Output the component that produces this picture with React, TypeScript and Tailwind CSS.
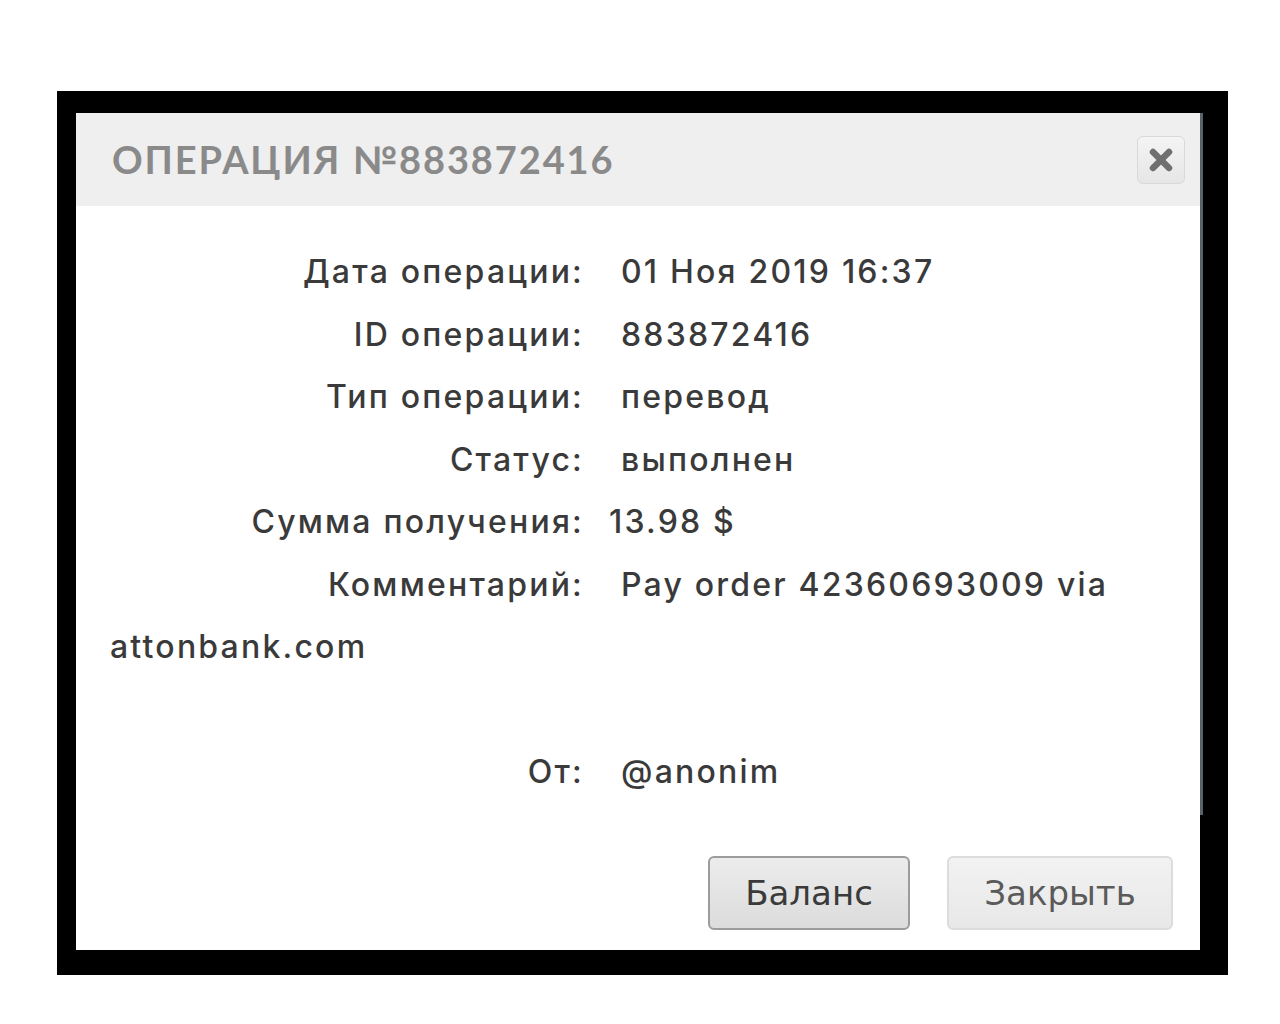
import React from "react";

const body = { fontFamily: "Inter, 'Noto Sans', sans-serif" } as React.CSSProperties;

function Row({ label, value, tight }: { label: string; value: React.ReactNode; tight?: boolean }) {
  return (
    <div className="h-[62.5px] leading-[62.5px] whitespace-nowrap">
      <span className="inline-block w-[499px] pr-[25px] text-right">{label}</span>
      <span className={tight ? "" : "pl-3"}>{value}</span>
    </div>
  );
}

export default function App() {
  return (
    <div className="min-h-screen bg-white pt-[91px] pl-[57px]">
      <div className="w-[1171px] h-[884px] bg-black pt-[22px] pl-[19px]">
        <div className="relative w-[1124px] h-[837px] bg-white flex flex-col">
          <div className="absolute right-[-3px] top-0 w-[3px] h-[702px] bg-[#56646a]" />
          <div className="h-[93px] bg-[#efefef] flex items-center justify-between pl-[36px] pr-[15px]">
            <div
              className="text-[38px] font-bold text-[#8a8a8a] tracking-[1.9px]"
              style={{ fontFamily: "Lato, 'DejaVu Sans', sans-serif" }}
            >
              ОПЕРАЦИЯ №883872416
            </div>
            <div className="w-[48px] h-[48px] rounded-[6px] border border-[#d9d9d9] bg-gradient-to-b from-[#f4f4f4] to-[#e6e6e6] flex items-center justify-center">
              <svg width="26" height="26" viewBox="0 0 26 26">
                <path d="M5 5 L21 21 M21 5 L5 21" stroke="#6f6f6f" strokeWidth="6.5" strokeLinecap="round" />
              </svg>
            </div>
          </div>
          <div className="pl-[34px] pt-[35px] text-[32px] font-medium tracking-[2.2px] text-[#3a3a3a]" style={body}>
            <Row label="Дата операции:" value="01 Ноя 2019 16:37" />
            <Row label="ID операции:" value="883872416" />
            <Row label="Тип операции:" value="перевод" />
            <Row label="Статус:" value="выполнен" />
            <Row label="Сумма получения:" value="13.98 $" tight />
            <Row label="Комментарий:" value="Pay order 42360693009 via" />
            <div className="h-[62.5px] leading-[62.5px]">attonbank.com</div>
            <div className="h-[62.5px]" />
            <Row label="От:" value="@anonim" />
          </div>
          <div
            className="mt-auto flex justify-end gap-[37px] pr-[27px] pb-[20px] text-[34px]"
            style={{ fontFamily: "'DejaVu Sans', sans-serif" }}
          >
            <button className="w-[202px] h-[74px] rounded-[6px] border-2 border-[#9c9c9c] bg-gradient-to-b from-[#ececec] to-[#dcdcdc] text-[#3a3a3a]">
              Баланс
            </button>
            <button className="w-[226px] h-[74px] rounded-[6px] border-2 border-[#dcdcdc] bg-gradient-to-b from-[#f2f2f2] to-[#e8e8e8] text-[#5a5a5a]">
              Закрыть
            </button>
          </div>
        </div>
      </div>
    </div>
  );
}
